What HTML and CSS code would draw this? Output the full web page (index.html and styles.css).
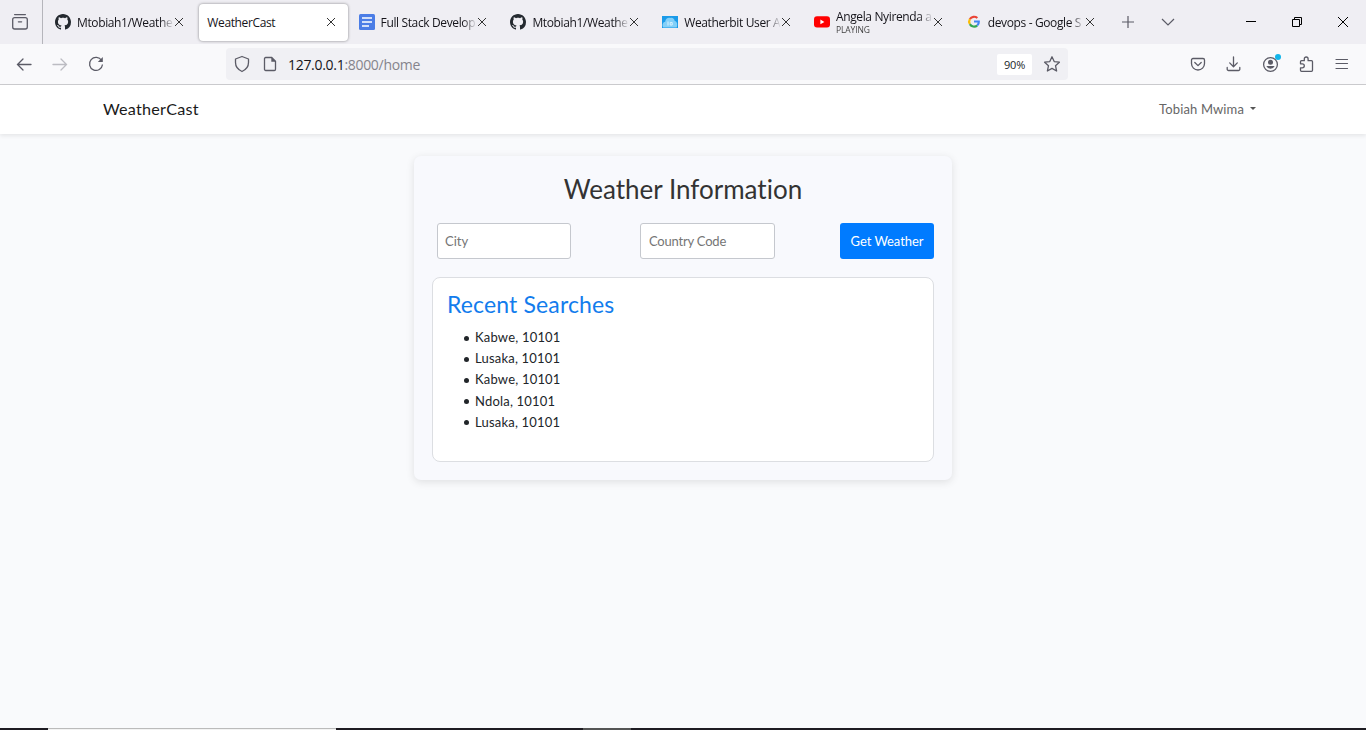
FILE: index.html
```html
<!DOCTYPE html>
<html lang="en">
<head>
<meta charset="utf-8">
<title>WeatherCast</title>
<link rel="stylesheet" href="styles.css">
</head>
<body>
<svg class="defs" width="0" height="0">
  <symbol id="github" viewBox="0 0 16 16"><path fill="#24292f" d="M8 0C3.58 0 0 3.58 0 8c0 3.54 2.29 6.53 5.47 7.59.4.07.55-.17.55-.38 0-.19-.01-.82-.01-1.49-2.01.37-2.53-.49-2.69-.94-.09-.23-.48-.94-.82-1.13-.28-.15-.68-.52-.01-.53.63-.01 1.08.58 1.23.82.72 1.21 1.87.87 2.33.66.07-.52.28-.87.51-1.07-1.78-.2-3.64-.89-3.64-3.95 0-.87.31-1.59.82-2.15-.08-.2-.36-1.02.08-2.12 0 0 .67-.21 2.2.82.64-.18 1.32-.27 2-.27s1.36.09 2 .27c1.53-1.04 2.2-.82 2.2-.82.44 1.1.16 1.92.08 2.12.51.56.82 1.27.82 2.15 0 3.07-1.87 3.75-3.65 3.95.29.25.54.73.54 1.48 0 1.07-.01 1.93-.01 2.2 0 .21.15.46.55.38A8.01 8.01 0 0 0 16 8c0-4.42-3.58-8-8-8z"/></symbol>
  <symbol id="x" viewBox="0 0 10 10"><path d="M1 1l8 8M9 1L1 9" fill="none" stroke="#333" stroke-width="1"/></symbol>
</svg>
<header class="browser">
  <div class="tabstrip">
    <div class="view"><svg width="18" height="18" viewBox="0 0 18 18" fill="none" stroke="#5b5b66" stroke-width="1.3" stroke-linecap="round"><path d="M3.6 1.6h10.8"/><rect x="1.7" y="4.6" width="14.6" height="11.4" rx="2"/><path d="M7.4 8.8h3.2"/></svg></div>
    <div class="tabs">
      <div class="tab"><svg class="fav"><use href="#github"/></svg><span class="label">Mtobiah1/Weathe</span><svg class="close"><use href="#x"/></svg></div>
      <div class="tab active"><span class="label">WeatherCast</span><svg class="close"><use href="#x"/></svg></div>
      <div class="tab"><svg class="fav" viewBox="0 0 16 16"><rect width="16" height="16" rx="1.5" fill="#4b7de6"/><path d="M3 4h10M3 8h10M3 12h7" stroke="#fff" stroke-width="1.6"/></svg><span class="label">Full Stack Develop</span><svg class="close"><use href="#x"/></svg></div>
      <div class="tab"><svg class="fav"><use href="#github"/></svg><span class="label">Mtobiah1/Weathe</span><svg class="close"><use href="#x"/></svg></div>
      <div class="tab"><svg class="fav" viewBox="0 0 16 16"><rect y="2" width="16" height="12" fill="#1b9be9"/><path d="M1.2 13.4C-.2 10.5 1 8 3.2 7.7 3.5 4.8 6 3.2 8.2 4c2-.9 4.3.5 4.5 3 2.5.5 3.1 3.5 2 6.4z" fill="#84d0f8"/><path d="M6 7.5v4M8.2 8.5h2v2.500h-2z" stroke="#d9f2ff" fill="none"/></svg><span class="label">Weatherbit User A</span><svg class="close"><use href="#x"/></svg></div>
      <div class="tab"><svg class="fav" viewBox="0 0 16 16"><rect y="2.2" width="16" height="11.4" rx="3" fill="#f00"/><path d="M6.4 5.6v4.600l4-2.300z" fill="#fff"/></svg><span class="label two">Angela Nyirenda a<small>PLAYING</small></span><svg class="close"><use href="#x"/></svg></div>
      <div class="tab"><svg class="fav" viewBox="0 0 20 20" fill="none" stroke-width="2.700"><path d="M4.800 6.400A6.300 6.300 0 0 1 14.200 5" stroke="#ea4335"/><path d="M4.800 6.400a6.300 6.300 0 0 0 0 6.200" stroke="#fbbc05"/><path d="M4.800 12.600a6.300 6.300 0 0 0 9.200 1.800" stroke="#34a853"/><path d="M14 14.400a6 6 0 0 0 2-5H10" stroke="#4285f4"/></svg><span class="label">devops - Google S</span><svg class="close"><use href="#x"/></svg></div>
    </div>
    <svg class="plus" width="14" height="14" viewBox="0 0 14 14"><path d="M7 1v12M1 7h12" stroke="#5b5b66" stroke-width="1.2"/></svg>
    <svg class="chev" width="14" height="14" viewBox="0 0 14 14"><path d="M1 4l6 6 6-6" fill="none" stroke="#5b5b66" stroke-width="1.2"/></svg>
    <div class="winctl">
      <svg width="12" height="12" viewBox="0 0 12 12"><path d="M1 5.5h10" stroke="#000"/></svg>
      <svg width="12" height="12" viewBox="0 0 12 12" fill="none" stroke="#000"><path d="M1.500 3.500h7v7h-7zM3.500 3.500v-2h7v7h-2"/></svg>
      <svg width="12" height="12" viewBox="0 0 12 12"><path d="M1 1l10 10M11 1L1 11" stroke="#000"/></svg>
    </div>
  </div>
  <div class="toolbar">
    <div class="nav">
      <svg width="16" height="16" viewBox="0 0 16 16" fill="none" stroke="#5b5b66" stroke-width="1.3" stroke-linecap="round"><path d="M15 8.500H1.500M7 3L1.500 8.500 7 14"/></svg>
      <svg width="16" height="16" viewBox="0 0 16 16" fill="none" stroke="#bcbcc2" stroke-width="1.3" stroke-linecap="round"><path d="M1 8.500h13.500M9 3l5.500 5.500L9 14"/></svg>
      <svg width="16" height="16" viewBox="0 0 16 16" fill="none" stroke="#5b5b66" stroke-width="1.300"><path d="M13.600 4.500A6.500 6.500 0 1 0 14.500 8.500"/><path d="M14.800 1v5h-5z" fill="#5b5b66" stroke="none"/></svg>
    </div>
    <div class="urlbar">
      <svg width="16" height="18" viewBox="0 0 16 18" fill="none" stroke="#5b5b66" stroke-width="1.3" stroke-linejoin="round"><path d="M8 1.500L14.500 4v3.500c0 4-2.800 7.300-6.500 9-3.700-1.700-6.500-5-6.500-9V4z"/></svg>
      <svg class="page" width="14" height="16" viewBox="0 0 14 16" fill="none" stroke="#5b5b66" stroke-width="1.300"><path d="M2.700 1.500h6l3.800 3.800v8a1.200 1.200 0 0 1-1.200 1.200H2.700a1.200 1.200 0 0 1-1.200-1.200V2.700a1.200 1.200 0 0 1 1.200-1.200z"/><path d="M8.300 1l4.700 4.700H8.300z" fill="#5b5b66" stroke="none"/></svg>
      <span class="url">127.0.0.1<i>:8000/home</i></span>
      <span class="zoom">90%</span>
      <svg width="16" height="16" viewBox="0 0 16 16" fill="none" stroke="#5b5b66" stroke-width="1.300" stroke-linejoin="round"><path d="M8 .8l2.200 4.800 5.200.6-3.900 3.500 1.100 5.300L8 12.400 3.400 15l1.100-5.300L.6 6.200l5.200-.6z"/></svg>
    </div>
    <div class="tools">
      <svg width="16" height="16" viewBox="0 0 16 16" fill="none" stroke="#5b5b66" stroke-width="1.300" stroke-linecap="round" stroke-linejoin="round"><path d="M3 2.500h10a1.500 1.500 0 0 1 1.500 1.500v3.500a6.500 6.500 0 0 1-13 0V4A1.500 1.500 0 0 1 3 2.500z"/><path d="M4.800 6.500L8 9.600l3.200-3.100"/></svg>
      <svg width="16" height="16" viewBox="0 0 16 16" fill="none" stroke="#5b5b66" stroke-width="1.300" stroke-linecap="round" stroke-linejoin="round"><path d="M7.500 1v9.500M3.700 6.900l3.800 3.800 3.800-3.800M1.200 11.500v1.700a1.300 1.300 0 0 0 1.300 1.300h10a1.300 1.300 0 0 0 1.300-1.300v-1.700"/></svg>
      <svg width="16" height="16" viewBox="0 0 16 16"><circle cx="8.500" cy="8.500" r="6.900" fill="none" stroke="#5b5b66" stroke-width="1.300"/><circle cx="8.500" cy="6.300" r="2.500" fill="#5b5b66"/><path d="M4.300 10h8.400a4.600 4.600 0 0 1-8.400 0z" fill="#5b5b66"/><circle cx="16" cy="1" r="3" fill="#12b5ea"/></svg>
      <svg width="16" height="16" viewBox="0 0 16 16" fill="none" stroke="#5b5b66" stroke-width="1.300" stroke-linejoin="round"><path d="M2.500 7.800V5.700a1 1 0 0 1 1-1h2.800V2.900a1.900 1.900 0 0 1 3.800 0v1.800h3.400a1 1 0 0 1 1 1v8.600a1 1 0 0 1-1 1h-10a1 1 0 0 1-1-1v-2.500h1.800a2 2 0 0 0 0-4z"/></svg>
      <svg width="16" height="16" viewBox="0 0 16 16"><path d="M2 3.500h11.500M2 7.500h11.500M2 12.500h11.500" stroke="#5b5b66" stroke-width="1.200" stroke-linecap="round"/></svg>
    </div>
  </div>
</header>
<nav class="navbar"><span class="brand">WeatherCast</span><span class="user">Tobiah Mwima</span><span class="caret"></span></nav>
<main class="main">
  <section class="card">
    <h1 class="title">Weather Information</h1>
    <form class="form">
      <input class="field city" placeholder="City">
      <input class="field country" placeholder="Country Code">
      <button class="btn" type="button">Get Weather</button>
    </form>
    <div class="recent">
      <h2 class="subtitle">Recent Searches</h2>
      <ul class="list"><li>Kabwe, 10101</li><li>Lusaka, 10101</li><li>Kabwe, 10101</li><li>Ndola, 10101</li><li>Lusaka, 10101</li></ul>
    </div>
  </section>
</main>
<footer class="taskbar"><span class="dark start"></span><span class="search"></span><span class="dark mid"></span><span class="app"></span><span class="dark rest"></span></footer>
</body>
</html>
```
FILE: styles.css
```css
* { box-sizing: border-box; }
body { margin: 0; height: 730px; overflow: hidden; display: flex; flex-direction: column; background: #f9fafc; font-family: Lato, sans-serif; font-size: 13px; font-variant-ligatures: none; color: #212529; }
svg { display: block; flex: none; overflow: visible; }
.defs { position: absolute; }
.browser { font-family: "Open Sans", "Noto Sans", sans-serif; flex: none; }
.tabstrip { height: 44px; background: #efeef3; display: flex; align-items: center; }
.view { width: 43px; height: 44px; border-right: 1px solid #b5b5bb; display: flex; align-items: center; padding-left: 11px; flex: none; }
.tabs { display: flex; padding-left: 4px; }
.tab { width: 151.8px; height: 37px; padding-left: 8px; padding-right: 15px; display: flex; align-items: center; }
.active { background: #fff; border-radius: 4px; box-shadow: 0 0 3px rgba(0,0,0,.45); width: 149px; margin: 0 2.3px 0 .5px; padding-right: 12px; }
.fav { width: 16px; height: 16px; margin-right: 6px; }
.label { flex: 1; min-width: 0; white-space: nowrap; font-size: 12px; letter-spacing: -.37px; line-height: 18px; color: #15141a; margin-top: 1px; -webkit-mask-image: linear-gradient(to left, transparent, #000 14px); mask-image: linear-gradient(to left, transparent, #000 14px); }
.active .label { -webkit-mask-image: none; mask-image: none; }
.two { line-height: 15px; margin-top: 0; }
.two small { display: block; font-size: 8.5px; line-height: 11px; letter-spacing: -.1px; color: #444; }
.close { width: 10px; height: 10px; }
.plus { margin-left: 11px; }
.chev { margin-left: 26px; }
.winctl { margin-left: auto; display: flex; gap: 34px; padding-right: 17px; }
.toolbar { height: 41px; background: #f9f9fb; border-bottom: 1px solid #cccccf; display: flex; align-items: center; padding: 0 16px; }
.nav { display: flex; gap: 20px; width: 210px; }
.urlbar { width: 842px; height: 32px; border-radius: 4px; background: #f0f0f4; display: flex; align-items: center; padding: 0 8px; }
.page { margin-left: 13px; }
.url { margin-left: 11px; font-size: 14px; letter-spacing: -.3px; color: #15141a; flex: 1; }
.url i { font-style: normal; color: #85848c; }
.zoom { width: 35px; height: 21px; line-height: 22px; border-radius: 2px; background: #fff; font-size: 11px; text-align: center; margin-right: 12px; letter-spacing: -.2px; }
.tools { margin-left: auto; display: flex; gap: 20px; }
.navbar { height: 49px; background: #fff; box-shadow: 0 2px 4px rgba(0,0,0,.08); display: flex; align-items: center; padding: 0 110px 2px 103px; flex: none; }
.brand { font-size: 16.2px; letter-spacing: .23px; color: #1a1a1a; }
.user { margin-left: auto; letter-spacing: .13px; color: #666; }
.caret { margin-left: 6px; border: 3.5px solid transparent; border-top-color: #555; border-bottom: 0; }
.main { flex: 1; padding-top: 22px; }
.card { width: 538px; height: 324px; margin: 0 auto; padding: 16px 18px 18px; border-radius: 7px; background: #f8f9fd; box-shadow: 0 2px 8px rgba(0,0,0,.11); }
.title { margin: 0; height: 51px; font-weight: 400; font-size: 26px; line-height: 34px; text-align: center; color: #333; }
.form { display: flex; margin: 0 0 18px 5px; height: 36px; }
.field { border: 1px solid #c5c8ce; border-radius: 3px; background: #fff; padding: 0 7px; font: 13px Lato, sans-serif; }
.field::placeholder { color: #757575; }
.city { width: 134px; }
.country { width: 135px; margin-left: 69px; padding-left: 8px; letter-spacing: -.2px; }
.btn { width: 94px; margin-left: auto; padding: 0; border: 0; border-radius: 3px; background: #007bff; color: #fff; font: 13px Lato, sans-serif; letter-spacing: -.07px; }
.recent { height: 185px; background: #fff; border: 1px solid #dcdee2; border-radius: 8px; padding: 12px 14px; }
.subtitle { margin: 0 0 9px; font-weight: 400; font-size: 23px; letter-spacing: .14px; line-height: 28px; color: #127ced; }
.list { margin: 0; padding-left: 28px; line-height: 21.2px; letter-spacing: .2px; list-style: none; }
.list li { display: flex; align-items: center; }
.list li::before { content: ""; width: 5px; height: 5px; margin: 1px 6px 0 -11px; border-radius: 50%; background: #212529; }
.taskbar { height: 2px; display: flex; flex: none; }
.dark { background: #1e1c22; }
.start { width: 48px; }
.search { width: 288px; background: #f3f3f3; border-top: 1px solid #bbb; }
.mid { width: 247px; }
.app { width: 48px; background: #555; }
.rest { flex: 1; }
```
